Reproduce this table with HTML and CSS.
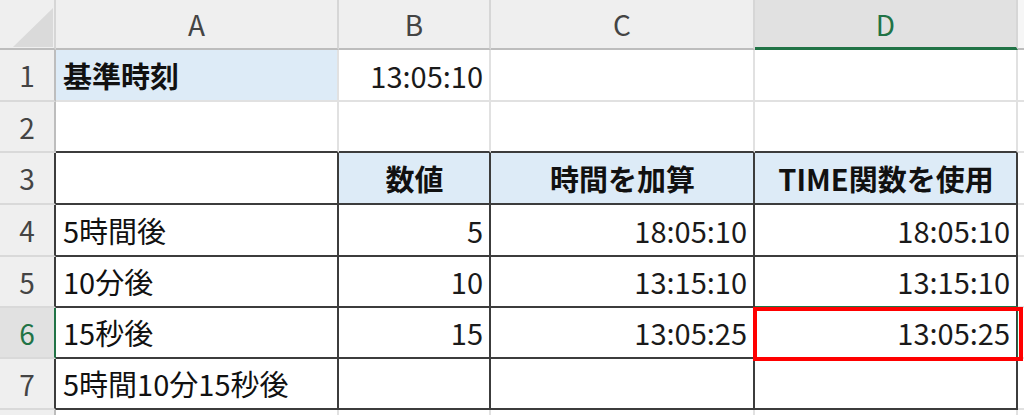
FILE: index.html
```html
<!DOCTYPE html>
<html lang="ja">
<head>
<meta charset="utf-8">
<link rel="stylesheet" href="styles.css">
</head>
<body>
<div class="sheet">
  <div class="grid">
    <div class="hd corner"><span class="tri"></span></div>
    <div class="hd col">A</div>
    <div class="hd col">B</div>
    <div class="hd col">C</div>
    <div class="hd col sel">D</div>
    <div class="hd col end"></div>

    <div class="rh">1</div>
    <div class="c blue bold">基準時刻</div>
    <div class="c num">13:05:10</div>
    <div class="c"></div>
    <div class="c"></div>
    <div class="c"></div>

    <div class="rh">2</div>
    <div class="c above"></div>
    <div class="c above"></div>
    <div class="c above"></div>
    <div class="c above"></div>
    <div class="c"></div>

    <div class="rh tl">3</div>
    <div class="c t"></div>
    <div class="c t blue bold center">数値</div>
    <div class="c t blue bold center">時間を加算</div>
    <div class="c t blue bold center">TIME関数を使用</div>
    <div class="c"></div>

    <div class="rh tl">4</div>
    <div class="c t">5時間後</div>
    <div class="c t num">5</div>
    <div class="c t num">18:05:10</div>
    <div class="c t num">18:05:10</div>
    <div class="c"></div>

    <div class="rh tl">5</div>
    <div class="c t">10分後</div>
    <div class="c t num">10</div>
    <div class="c t num">13:15:10</div>
    <div class="c t num">13:15:10</div>
    <div class="c"></div>

    <div class="rh tl rsel">6</div>
    <div class="c t">15秒後</div>
    <div class="c t num">15</div>
    <div class="c t num">13:05:25</div>
    <div class="c t num">13:05:25</div>
    <div class="c"></div>

    <div class="rh tl">7</div>
    <div class="c t">5時間10分15秒後</div>
    <div class="c t"></div>
    <div class="c t"></div>
    <div class="c t"></div>
    <div class="c"></div>

    <div class="rh"></div>
    <div class="c"></div>
    <div class="c"></div>
    <div class="c"></div>
    <div class="c"></div>
    <div class="c"></div>
  </div>
  <div class="active"></div>
  <div class="highlight"></div>
</div>
</body>
</html>
```

FILE: styles.css
```css
html, body {
  margin: 0;
  padding: 0;
  background: #ffffff;
  overflow: hidden;
}

.sheet {
  position: relative;
  width: 1024px;
  height: 415px;
  overflow: hidden;
  font-family: "Noto Sans CJK JP", "Noto Sans", sans-serif;
  font-size: 29px;
  color: #111;
}

.grid {
  display: grid;
  grid-template-columns: 56px 283px 152px 264px 263px 6px;
  grid-template-rows: 50px 52px 51px 52px 52px 51px 51px 51px 30px;
  border-top: 2px solid #e8eee2;
  margin-top: -2px;
}

.grid > div {
  box-sizing: border-box;
  display: flex;
  align-items: center;
  line-height: 1;
  white-space: nowrap;
  overflow: hidden;
}

.hd {
  background: #efefef;
  border-right: 2px solid #d6d6d6;
  border-bottom: 2px solid #bdbdbd;
  justify-content: center;
  color: #444;
  font-size: 28px;
}

.hd.sel {
  background: #e1e1e1;
  color: #217346;
  border-bottom: 3px solid #217346;
}

.hd.end {
  background: #f6f6f6;
  border-right: none;
}

.corner {
  position: relative;
}

.tri {
  position: absolute;
  left: 13px;
  top: 8px;
  width: 40px;
  height: 39px;
  background: #dadada;
  clip-path: polygon(100% 0, 100% 100%, 0 100%);
}

.rh {
  background: #efefef;
  border-right: 2px solid #bdbdbd;
  border-bottom: 2px solid #d9d9d9;
  justify-content: center;
  color: #444;
  font-size: 28px;
}

.rh.tl {
  border-right-color: #3c3c3c;
}

.rh.rsel {
  background: #e1e1e1;
  color: #217346;
  border-right-color: #217346;
}

.c {
  border-right: 2px solid #e1e1e1;
  border-bottom: 2px solid #e1e1e1;
  padding: 0 6px 0 7px;
}

.c.above {
  border-bottom-color: #3c3c3c;
}

.c.t {
  border-right-color: #3c3c3c;
  border-bottom-color: #3c3c3c;
}

.blue {
  background: #ddebf7;
}

.bold {
  font-weight: 700;
}

.center {
  justify-content: center;
}

.num {
  justify-content: flex-end;
  color: #1a1a1a;
}

.active {
  position: absolute;
  left: 755px;
  top: 306px;
  width: 263px;
  height: 53px;
  box-sizing: border-box;
  border: 1px solid #217346;
}

.highlight {
  position: absolute;
  left: 753px;
  top: 307px;
  width: 270px;
  height: 54px;
  box-sizing: border-box;
  border: 4px solid #ff0000;
}
```
